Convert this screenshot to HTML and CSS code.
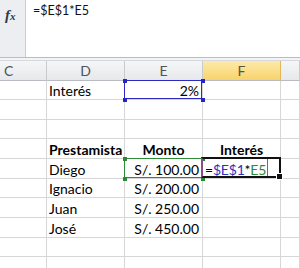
FILE: index.html
```html
<!DOCTYPE html>
<html>
<head>
<meta charset="utf-8">
<link rel="stylesheet" href="styles.css">
</head>
<body>
<div class="fbar">
  <div class="fx-area"><span class="fx">f<span class="fx-x">x</span></span></div>
  <div class="ftext">=$E$1*E5</div>
</div>
<div class="gap"></div>
<div class="sheet">
  <div class="hc hc-c">C</div>
  <div class="hc">D</div>
  <div class="hc">E</div>
  <div class="hc hc-active">F</div>
  <div class="hc"></div>

  <div class="cell"></div>
  <div class="cell">Interés</div>
  <div class="cell right ref-blue">2%</div>
  <div class="cell"></div>
  <div class="cell"></div>

  <div class="cell"></div><div class="cell"></div><div class="cell"></div><div class="cell"></div><div class="cell"></div>
  <div class="cell"></div><div class="cell"></div><div class="cell"></div><div class="cell"></div><div class="cell"></div>

  <div class="cell"></div>
  <div class="cell bold">Prestamista</div>
  <div class="cell bold center">Monto</div>
  <div class="cell bold center">Interés</div>
  <div class="cell"></div>

  <div class="cell"></div>
  <div class="cell">Diego</div>
  <div class="cell right ref-green">S/. 100.00</div>
  <div class="cell active"><span>=</span><span class="t-blue">$E$1</span><span>*</span><span class="t-green">E5</span></div>
  <div class="cell"></div>

  <div class="cell"></div>
  <div class="cell">Ignacio</div>
  <div class="cell right">S/. 200.00</div>
  <div class="cell"></div>
  <div class="cell"></div>

  <div class="cell"></div>
  <div class="cell">Juan</div>
  <div class="cell right">S/. 250.00</div>
  <div class="cell"></div>
  <div class="cell"></div>

  <div class="cell"></div>
  <div class="cell">José</div>
  <div class="cell right">S/. 450.00</div>
  <div class="cell"></div>
  <div class="cell"></div>

  <div class="cell"></div><div class="cell"></div><div class="cell"></div><div class="cell"></div><div class="cell"></div>
  <div class="cell"></div><div class="cell"></div><div class="cell"></div><div class="cell"></div><div class="cell"></div>
</div>
</body>
</html>
```

FILE: styles.css
```css
* { box-sizing: border-box; }
html, body { margin: 0; padding: 0; }
body {
  width: 300px;
  height: 268px;
  overflow: hidden;
  background: #ffffff;
  font-family: Lato, "Liberation Sans", sans-serif;
}

.fbar {
  display: flex;
  height: 58px;
  border-bottom: 1px solid #b9bdc3;
  background: #ffffff;
}
.fx-area {
  width: 26px;
  background: #eceef1;
  border-right: 1px solid #c9ccd1;
  padding: 4px 0 0 5px;
}
.fx {
  font-family: "Liberation Serif", serif;
  font-style: italic;
  font-weight: bold;
  font-size: 15px;
  line-height: 14px;
  color: #2f3a4a;
}
.fx-x {
  font-size: 11px;
}
.ftext {
  padding: 3px 0 0 7px;
  font-size: 12.5px;
  line-height: 15px;
  color: #111111;
}

.gap {
  height: 3px;
  background: #f3f4f5;
  border-bottom: 1px solid #d6d8db;
}

.sheet {
  display: grid;
  grid-template-columns: 47px 78px 78px 78px 1fr;
  grid-template-rows: 20px 19px 20px 19px 20px 20px 19px 20px 20px 19px 20px;
}

.hc {
  display: flex;
  justify-content: center;
  align-items: flex-end;
  padding-bottom: 1px;
  font-size: 14px;
  line-height: 17px;
  color: #4f5357;
  background: linear-gradient(#f5f6f7, #e6e8eb);
  border-right: 1px solid #c7cacf;
  border-bottom: 1px solid #b8bcc2;
}
.hc-c {
  justify-content: flex-start;
  padding-left: 4px;
}
.hc-active {
  background: linear-gradient(#fdeaa9, #f8d36c);
  border-right: 1px solid #e1b75a;
  color: #5a5440;
}

.cell {
  display: flex;
  align-items: flex-end;
  padding: 0 2px 0 2px;
  font-size: 14px;
  line-height: 17px;
  color: #000000;
  white-space: nowrap;
  border-right: 1px solid #d6d6d6;
  border-bottom: 1px solid #d6d6d6;
}
.right { justify-content: flex-end; padding-right: 3px; }
.center { justify-content: center; }
.bold { font-weight: bold; }

.ref-blue, .ref-green, .active { position: relative; }

.ref-blue::before, .ref-green::before {
  content: "";
  position: absolute;
  left: -1px;
  top: -1px;
  right: 0;
  bottom: 0;
  border: 1px solid #2b2bc4;
  z-index: 1;
}
.ref-blue::after, .ref-green::after {
  content: "";
  position: absolute;
  left: -2px;
  top: -2px;
  width: 4px;
  height: 4px;
  background: #2424c8;
  box-shadow: 78px 0 0 #2424c8, 0 19px 0 #2424c8, 78px 19px 0 #2424c8;
  z-index: 2;
}
.ref-green::before { border-color: #2f8c36; }
.ref-green::after {
  background: #2a8a32;
  box-shadow: 78px 0 0 #2a8a32, 0 20px 0 #2a8a32, 78px 20px 0 #2a8a32;
}

.active { letter-spacing: -0.2px; }
.active::before {
  content: "";
  position: absolute;
  left: -2px;
  top: -2px;
  right: -1px;
  bottom: 0;
  border: 2px solid #111111;
  border-left: 2px solid #8c4a8a;
  z-index: 3;
}
.active::after {
  content: "";
  position: absolute;
  right: -3px;
  bottom: -2px;
  width: 5px;
  height: 5px;
  background: #111111;
  border: 1px solid #ffffff;
  z-index: 4;
}
.t-blue { color: #3030c0; }
.t-green {
  color: #2d8a36;
  align-self: stretch;
  display: flex;
  align-items: flex-end;
  padding-right: 1px;
  border-right: 1px solid #6e6e6e;
}
```
